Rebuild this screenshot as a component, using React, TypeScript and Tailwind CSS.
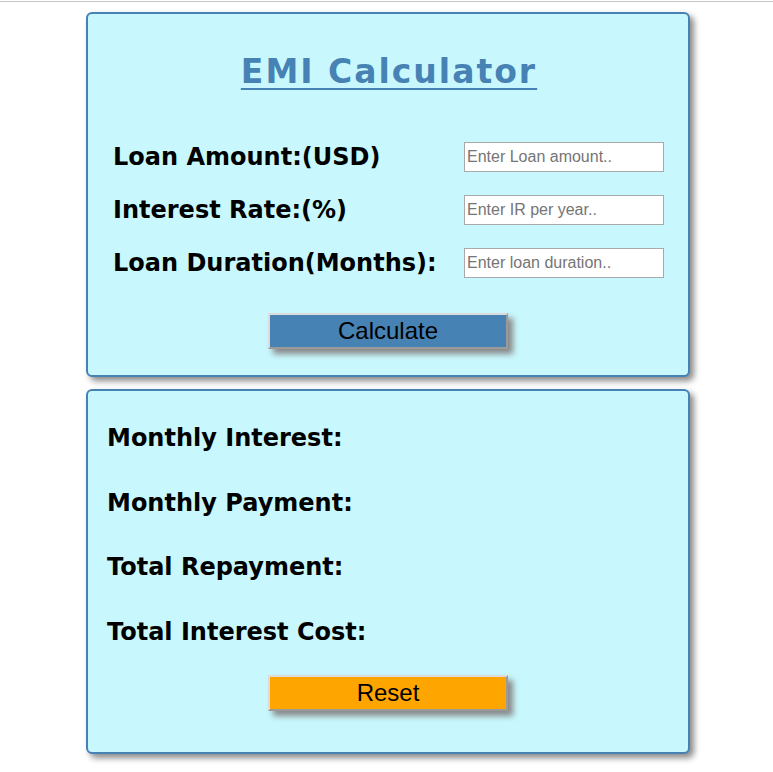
import React from 'react';

const labelFont = { fontFamily: '"DejaVu Sans", Verdana, sans-serif' };

const inputs = [
  { label: 'Loan Amount:(USD)', placeholder: 'Enter Loan amount..' },
  { label: 'Interest Rate:(%)', placeholder: 'Enter IR per year..' },
  { label: 'Loan Duration(Months):', placeholder: 'Enter loan duration..' },
];

const results = ['Monthly Interest:', 'Monthly Payment:', 'Total Repayment:', 'Total Interest Cost:'];

const App = () => {
  return (
    <div className="min-h-screen bg-white">
      <div className="mt-[1px] h-[1px] bg-[#c4c4c4]" />

      {/* Input card */}
      <div className="ml-[86px] mt-[10px] w-[604px] rounded-[6px] border-2 border-[#4682b4] bg-[#c8f8fd] pt-[39px] pb-[26px] shadow-[4px_4px_6px_#8a8a8a]">
        <h1
          className="pl-[2px] text-center text-[33px] leading-[37px] font-bold tracking-[2px] text-[#4682b4] underline decoration-[2px] underline-offset-[5px]"
          style={labelFont}
        >
          EMI Calculator
        </h1>

        <div className="mt-[52px] flex flex-col gap-[23px] pl-[25px]">
          {inputs.map((row) => (
            <div key={row.label} className="flex h-[30px] items-center">
              <span className="w-[351px] text-[24px] font-bold text-black" style={labelFont}>
                {row.label}
              </span>
              <input
                type="text"
                placeholder={row.placeholder}
                className="h-[30px] w-[200px] border border-[#a9a9a9] bg-white px-[2px] text-[16px] font-['Liberation_Sans',Arial,sans-serif] placeholder:text-[#757575]"
              />
            </div>
          ))}
        </div>

        <div className="mt-[35px] flex justify-center">
          <button className="h-[36px] w-[240px] border-2 border-t-[#dcdcdc] border-l-[#dcdcdc] border-r-[#9a9a9a] border-b-[#9a9a9a] bg-[#4682b4] text-[24px] leading-none text-black font-['Liberation_Sans',Arial,sans-serif] shadow-[5px_5px_6px_#888]">
            Calculate
          </button>
        </div>
      </div>

      {/* Result card */}
      <div className="ml-[86px] mt-[12px] w-[604px] rounded-[6px] border-2 border-[#4682b4] bg-[#c8f8fd] pt-[33px] pb-[41px] shadow-[4px_4px_6px_#8a8a8a]">
        <div className="flex flex-col gap-[36.6px] pl-[19px]">
          {results.map((r) => (
            <div key={r} className="h-[28px] text-[24px] leading-[28px] font-bold text-black" style={labelFont}>
              {r}
            </div>
          ))}
        </div>

        <div className="mt-[29px] flex justify-center">
          <button className="h-[36px] w-[240px] border-2 border-t-[#dcdcdc] border-l-[#dcdcdc] border-r-[#9a9a9a] border-b-[#9a9a9a] bg-[#ffa500] text-[24px] leading-none text-black font-['Liberation_Sans',Arial,sans-serif] shadow-[5px_5px_6px_#888]">
            Reset
          </button>
        </div>
      </div>
    </div>
  );
};

export default App;
